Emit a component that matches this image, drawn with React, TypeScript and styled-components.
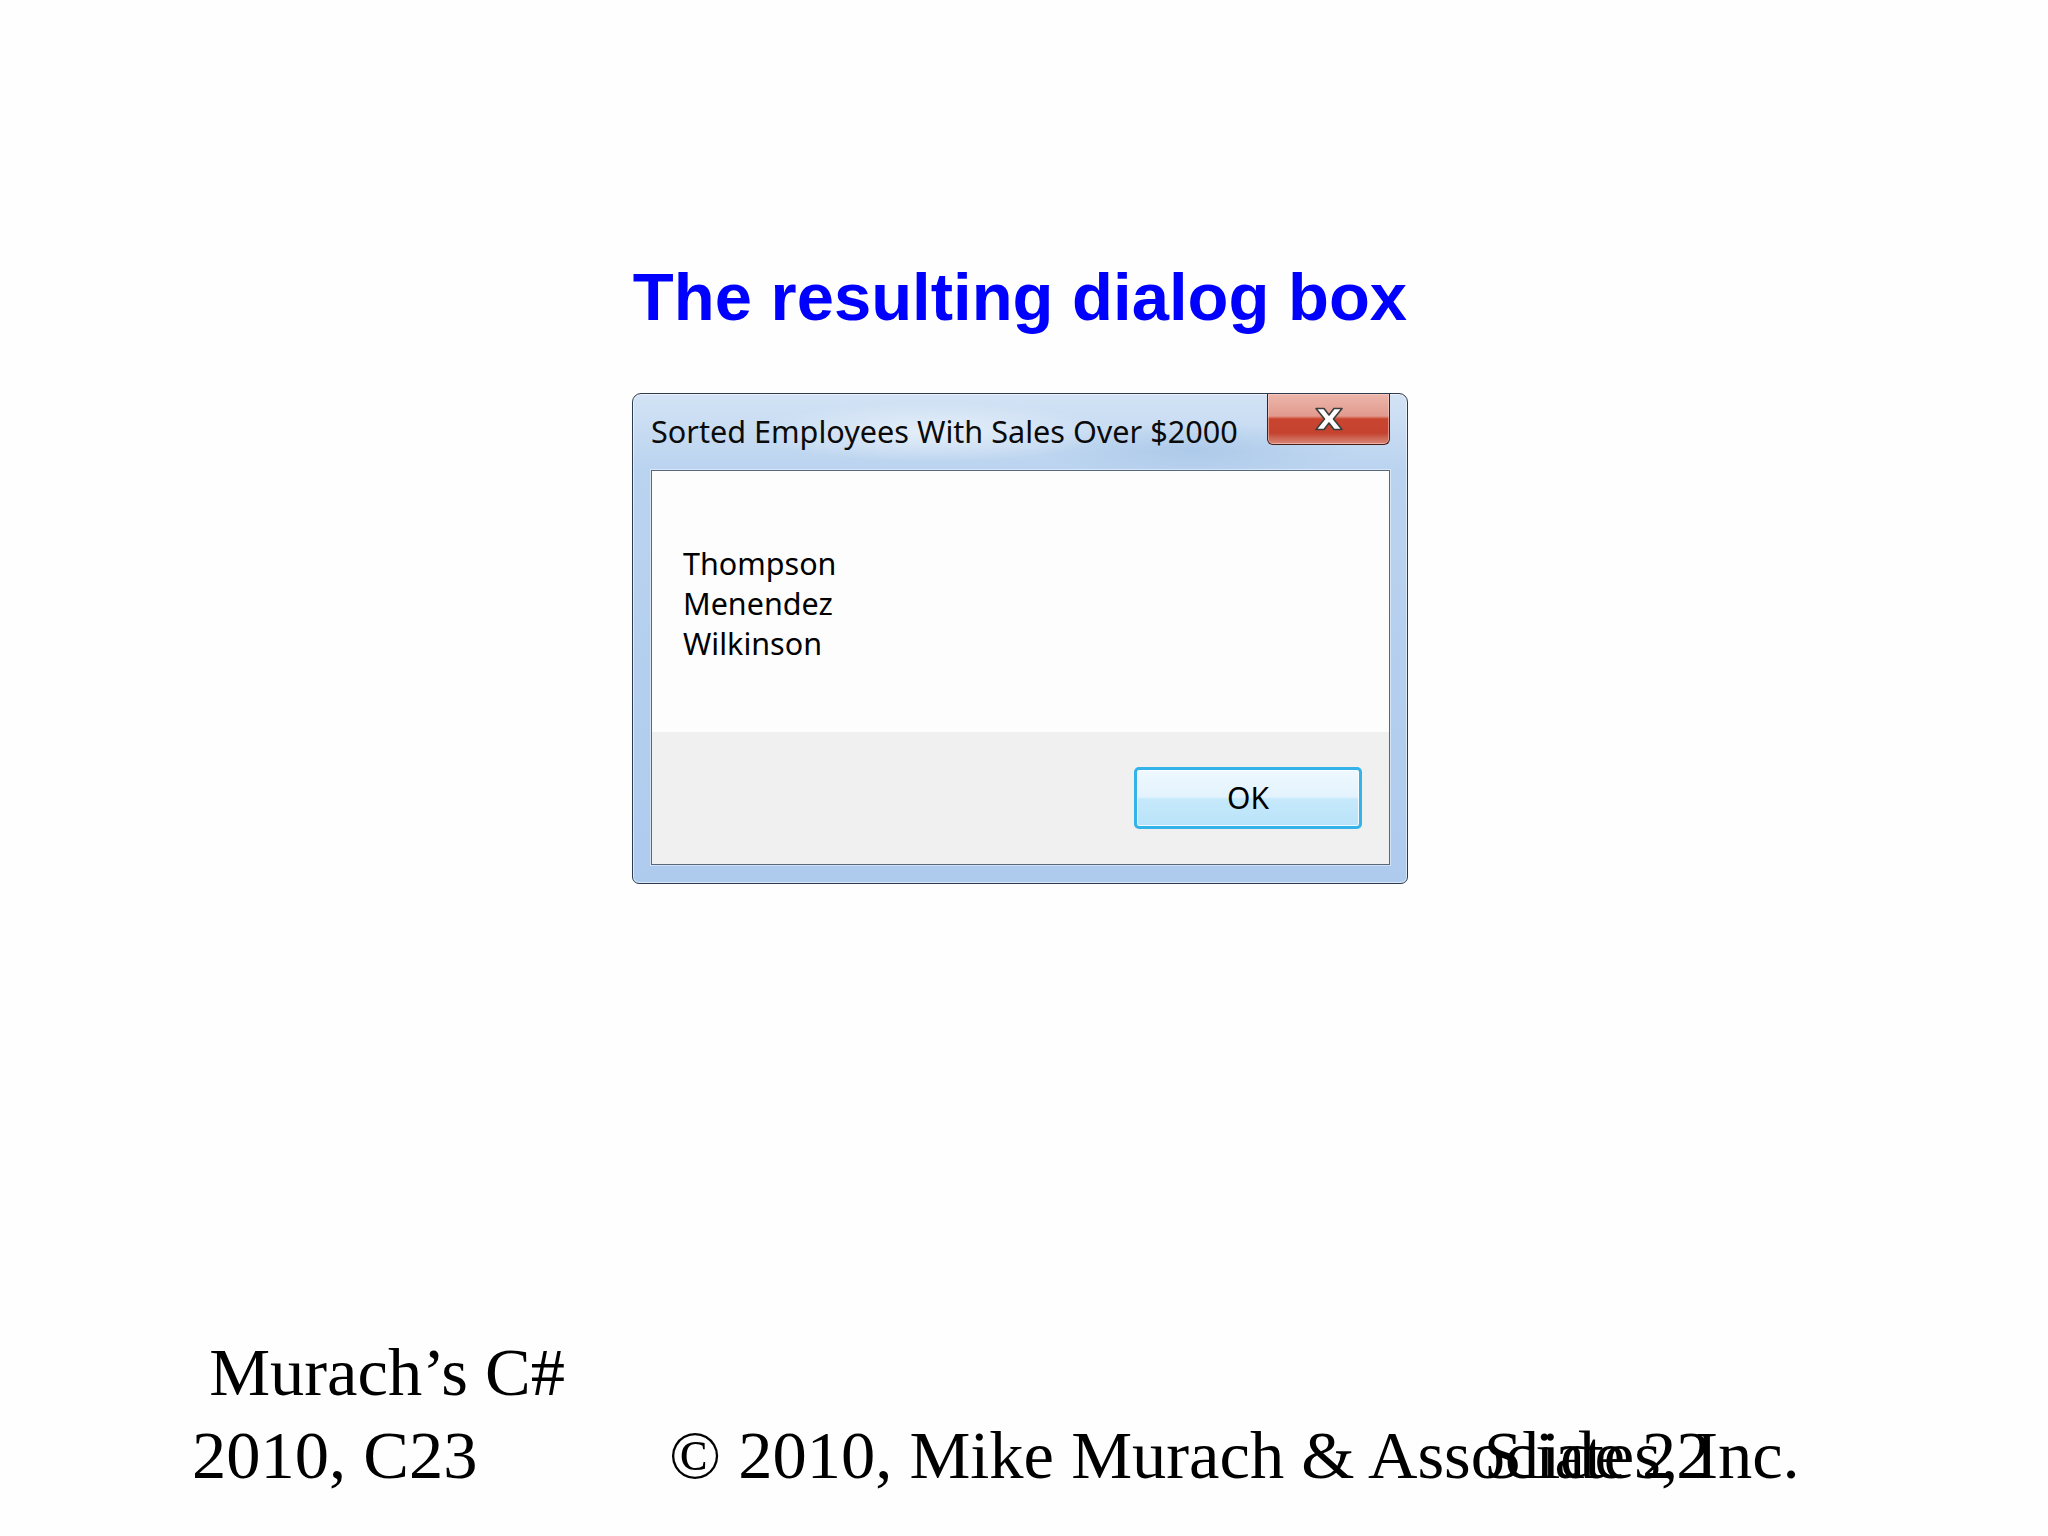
import React from "react";
import styled, { createGlobalStyle } from "styled-components";

const GlobalStyle = createGlobalStyle`
  html, body {
    margin: 0;
    padding: 0;
    background: #ffffff;
  }
  body {
    width: 2048px;
    height: 1536px;
    overflow: hidden;
  }
`;

const Page = styled.div`
  width: 2048px;
  height: 1536px;
  display: flex;
  flex-direction: column;
  background: #fefefe;
`;

const Slide = styled.main`
  display: flex;
  flex-direction: column;
  align-items: center;
  padding: 263px 8px 0 0;
`;

const Title = styled.h1`
  margin: 0;
  font-family: "Liberation Sans", Arial, sans-serif;
  font-weight: 700;
  font-size: 67px;
  line-height: 68px;
  color: #0000ff;
`;

const Window = styled.section`
  width: 776px;
  box-sizing: border-box;
  margin-top: 62px;
  padding: 0 17px 18px 18px;
  border: 1px solid #2c3b4d;
  border-radius: 9px 9px 7px 7px;
  background:
    radial-gradient(ellipse 180px 30px at 300px 38px, rgba(255, 255, 255, 0.55), transparent),
    radial-gradient(ellipse 160px 26px at 560px 56px, rgba(150, 185, 225, 0.45), transparent),
    linear-gradient(180deg, #d3e3f5 0px, #c6dbf2 40px, #bad3ef 76px, #aecbee 100%);
  box-shadow: inset 0 0 0 1px rgba(255, 255, 255, 0.55);
  font-family: "Noto Sans", "Open Sans", sans-serif;
  color: #000;
`;

const TitleBar = styled.header`
  display: flex;
  justify-content: space-between;
  align-items: flex-start;
  height: 76px;
`;

const TitleText = styled.div`
  padding-top: 17px;
  font-size: 30.6px;
  line-height: 40px;
  color: #0b0b0b;
`;

const CloseButton = styled.div`
  width: 123px;
  height: 51px;
  box-sizing: border-box;
  display: flex;
  align-items: center;
  justify-content: center;
  border: 1px solid #4a1d17;
  border-top: none;
  border-radius: 0 0 6px 6px;
  background: linear-gradient(
    180deg,
    #ecb6ac 0%,
    #e29a8d 44%,
    #c9442f 50%,
    #c4432f 78%,
    #d9897a 100%
  );
  box-shadow: inset 0 0 0 1px rgba(255, 220, 210, 0.5);
`;

const Client = styled.div`
  display: flex;
  flex-direction: column;
  border: 1px solid #56687c;
  box-shadow: 0 0 0 1px rgba(255, 255, 255, 0.45);
`;

const MessageArea = styled.div`
  height: 261px;
  box-sizing: border-box;
  padding: 72px 0 0 31px;
  background: #fdfdfd;
`;

const Line = styled.div`
  font-size: 30.5px;
  line-height: 40px;
`;

const ButtonRow = styled.div`
  display: flex;
  justify-content: flex-end;
  padding: 35px 27px 35px 0;
  background: #f0f0f0;
`;

const OkButton = styled.button`
  width: 228px;
  height: 62px;
  box-sizing: border-box;
  padding: 0;
  border: 3px solid #34b2ea;
  border-radius: 5px;
  background: linear-gradient(180deg, #eef8fe 0%, #e3f3fd 48%, #c6e9fb 52%, #b8e3f9 100%);
  box-shadow: inset 0 0 0 1px rgba(255, 255, 255, 0.8);
  font-family: "Noto Sans", "Open Sans", sans-serif;
  font-size: 30px;
  line-height: 1;
  color: #000;
`;

const Footer = styled.footer`
  display: grid;
  grid-template-columns: 477px 815px 1fr;
  margin-top: 447px;
  padding-left: 192px;
  font-family: "Liberation Serif", "Times New Roman", serif;
  font-size: 68.5px;
  line-height: 83px;
  color: #000;
`;

const CourseNote = styled.div`
  grid-column: 1;
  grid-row: 1;
`;

const Copyright = styled.div`
  grid-column: 2 / span 2;
  grid-row: 1;
  align-self: end;
  white-space: nowrap;
`;

const SlideNumber = styled.div`
  grid-column: 3;
  grid-row: 1;
  align-self: end;
  white-space: nowrap;
`;

const CloseGlyph = () => (
  <svg width="30" height="24" viewBox="0 0 30 24">
    <path
      d="M2 1.5 H10 L15 8 L20 1.5 H28 L19.5 12 L28 22.5 H20 L15 16 L10 22.5 H2 L10.5 12 Z"
      fill="#ffffff"
      stroke="#3d3d3d"
      strokeWidth="1.6"
      strokeLinejoin="round"
    />
  </svg>
);

const names = ["Thompson", "Menendez", "Wilkinson"];

export default function App() {
  return (
    <>
      <GlobalStyle />
      <Page>
        <Slide>
          <Title>The resulting dialog box</Title>
          <Window>
            <TitleBar>
              <TitleText>Sorted Employees With Sales Over $2000</TitleText>
              <CloseButton>
                <CloseGlyph />
              </CloseButton>
            </TitleBar>
            <Client>
              <MessageArea>
                {names.map((n) => (
                  <Line key={n}>{n}</Line>
                ))}
              </MessageArea>
              <ButtonRow>
                <OkButton>OK</OkButton>
              </ButtonRow>
            </Client>
          </Window>
        </Slide>
        <Footer>
          <CourseNote>{"\u00a0Murach\u2019s C# 2010, C23"}</CourseNote>
          <Copyright>© 2010, Mike Murach &amp; Associates, Inc.</Copyright>
          <SlideNumber>Slide 22</SlideNumber>
        </Footer>
      </Page>
    </>
  );
}
